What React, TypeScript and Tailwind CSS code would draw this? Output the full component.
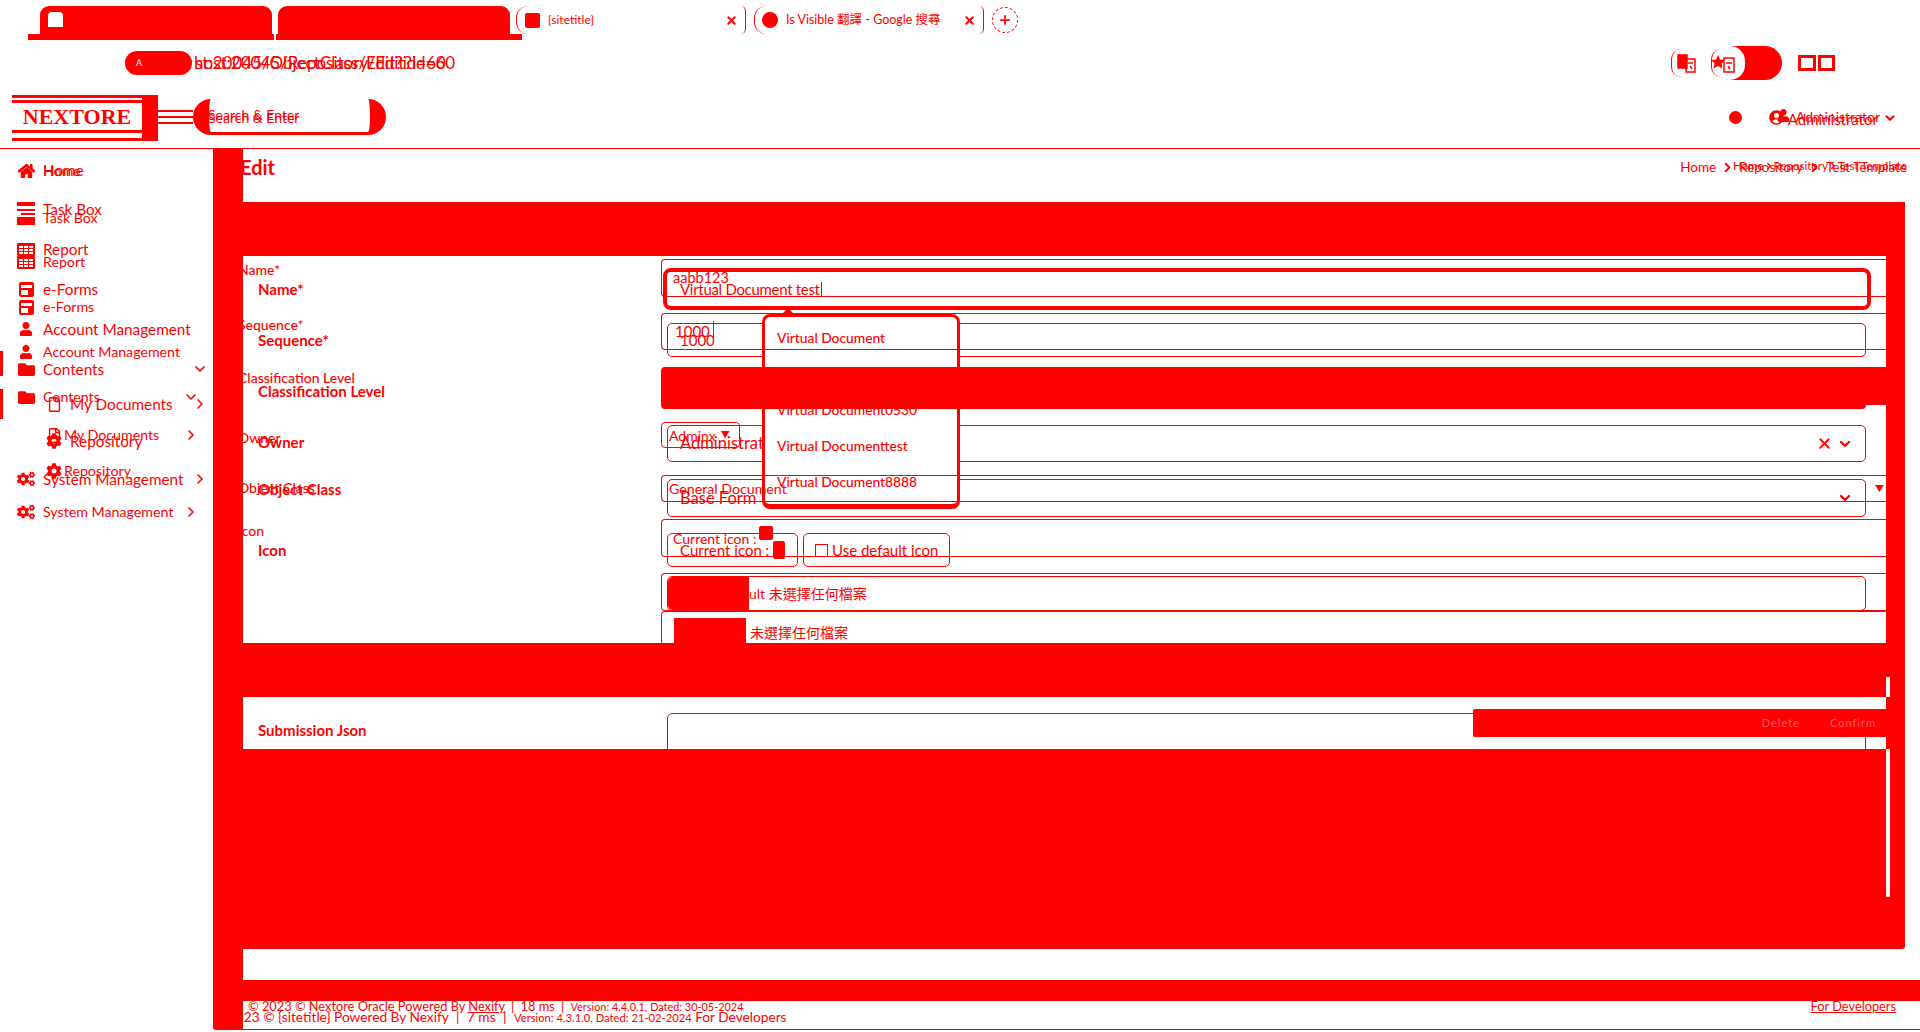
import React from "react";
import { ChevronDown, ChevronRight, Plus, X } from "lucide-react";
import { FaCog, FaCogs, FaFolder, FaHome, FaRegFile, FaRegFileAlt, FaUser, FaUserCircle } from "react-icons/fa";

const font = "font-['Lato','Noto_Sans_CJK_TC',sans-serif]";

const TaskIcon = () => (
  <svg width="18" height="23" viewBox="0 0 18 23" fill="#ff0000" className="translate-y-[4px]">
    <rect width="18" height="4" />
    <rect y="7" width="18" height="2" />
    <rect x="4" y="11" width="14" height="2" />
    <rect y="15" width="18" height="8" />
  </svg>
);

const TableIcon = () => (
  <svg width="18" height="13" viewBox="0 0 18 13" fill="#ff0000">
    <path fillRule="evenodd" d="M1 0h16a1 1 0 0 1 1 1v11a1 1 0 0 1-1 1H1a1 1 0 0 1-1-1V1a1 1 0 0 1 1-1zM2 3v2h4V3zm5 0v2h4V3zm5 0v2h4V3zM2 6v2h4V6zm5 0v2h4V6zm5 0v2h4V6zM2 9v2h4V9zm5 0v2h4V9zm5 0v2h4V9z" />
  </svg>
);

const FormIcon = () => (
  <svg width="15" height="15" viewBox="0 0 15 15" fill="#ff0000">
    <path fillRule="evenodd" d="M2 0h11a2 2 0 0 1 2 2v11a2 2 0 0 1-2 2H2a2 2 0 0 1-2-2V2a2 2 0 0 1 2-2zM2 3v3h11V3zm0 5v5h7V8z" />
  </svg>
);

type Item = { label: string; icon: React.ReactNode; sub?: boolean; chev?: "down" | "right"; mt: string; bar?: boolean };

const sideA: Item[] = [
  { label: "Home", icon: <FaHome size={17} />, mt: "mt-[11px]" },
  { label: "Task Box", icon: <TaskIcon />, mt: "mt-[19px]" },
  { label: "Report", icon: <TableIcon />, mt: "mt-[20px]" },
  { label: "e-Forms", icon: <FormIcon />, mt: "mt-[20px]" },
  { label: "Account Management", icon: <FaUser size={14} />, mt: "mt-[20px]" },
  { label: "Contents", icon: <FaFolder size={17} />, chev: "down", mt: "mt-[20px]", bar: true },
  { label: "My Documents", icon: <FaRegFile size={15} />, sub: true, chev: "right", mt: "mt-[15px]" },
  { label: "Repository", icon: <FaCog size={16} />, sub: true, mt: "mt-[17px]" },
  { label: "System Management", icon: <FaCogs size={18} />, chev: "right", mt: "mt-[18px]" },
];

const sideB: Item[] = [
  { label: "Home", icon: <FaHome size={17} />, mt: "mt-[12px]" },
  { label: "Task Box", icon: null, mt: "mt-[27px]" },
  { label: "Report", icon: <TableIcon />, mt: "mt-[24px]" },
  { label: "e-Forms", icon: <FormIcon />, mt: "mt-[25px]" },
  { label: "Account Management", icon: <FaUser size={14} />, mt: "mt-[25px]" },
  { label: "Contents", icon: <FaFolder size={17} />, chev: "down", mt: "mt-[25px]", bar: true },
  { label: "My Documents", icon: <FaRegFileAlt size={15} />, sub: true, chev: "right", mt: "mt-[18px]" },
  { label: "Repository", icon: <FaCog size={16} />, sub: true, mt: "mt-[16px]" },
  { label: "System Management", icon: <FaCogs size={18} />, chev: "right", mt: "mt-[21px]" },
];

const Sidebar = ({ items, big }: { items: Item[]; big: boolean }) => (
  <div className="flex w-[213px] shrink-0 flex-col">
    {items.map((it) => (
      <div
        key={it.label}
        className={`relative flex h-[20px] items-center ${it.mt} ${big ? "pr-[5px] text-[15.3px]" : "pr-[14px] text-[14.2px]"}`}
      >
        {it.bar && <span className={`absolute left-0 w-[3px] bg-[#ff0000] ${big ? "top-[-8px] h-[25px]" : "top-[2px] h-[30px]"}`} />}
        <span className={`flex items-center justify-center ${it.sub ? "ml-[44px] w-[20px]" : "ml-[17px] w-[18px]"}`}>{it.icon}</span>
        <span className={it.sub ? (big ? "ml-[6px]" : "ml-0") : "ml-[8px]"}>{it.label}</span>
        {it.chev === "down" && <ChevronDown size={16} strokeWidth={2.5} className="ml-auto" />}
        {it.chev === "right" && <ChevronRight size={16} strokeWidth={2.5} className="ml-auto" />}
      </div>
    ))}
  </div>
);

const Tabs = () => (
  <div className="relative flex h-[40px] items-end pl-[40px]">
    <div className="absolute bottom-0 left-[28px] h-[6px] w-[246px] bg-[#ff0000]" />
    <div className="absolute bottom-0 left-[276px] h-[6px] w-[246px] bg-[#ff0000]" />
    <div className="relative flex h-[34px] w-[232px] items-start rounded-t-[9px] bg-[#ff0000] pl-[8px] pt-[6px]">
      <div className="h-[15px] w-[15px] rounded-t-[4px] bg-white" />
    </div>
    <div className="relative ml-[6px] h-[34px] w-[232px] rounded-t-[9px] bg-[#ff0000]" />
    <div className="relative ml-[6px] flex h-[28px] w-[230px] items-center self-start mt-[6px] rounded-l-[12px] border-l border-[#ff0000] pl-[8px]">
      <div className="h-[15px] w-[15px] rounded-[2px] bg-[#ff0000]" />
      <span className="ml-[8px] text-[12px]">{"{sitetitle}"}</span>
      <X size={13} strokeWidth={3.5} className="ml-auto mr-[3px]" />
      <div className="h-full w-[5px] rounded-r-[12px] border-r border-[#ff0000]" />
    </div>
    <div className="ml-[8px] flex h-[28px] w-[230px] items-center self-start mt-[6px] rounded-l-[12px] border-l border-[#ff0000] pl-[7px]">
      <div className="h-[16px] w-[16px] rounded-full bg-[#ff0000]" />
      <span className="ml-[8px] whitespace-nowrap text-[12.5px]">Is Visible 翻譯 - Google 搜尋</span>
      <X size={13} strokeWidth={3.5} className="ml-auto mr-[3px]" />
      <div className="h-full w-[5px] rounded-r-[12px] border-r border-[#ff0000]" />
    </div>
    <div className="ml-[8px] flex h-[26px] w-[26px] items-center justify-center self-start mt-[7px] rounded-full border border-dashed border-[#ff0000]">
      <Plus size={14} strokeWidth={3} />
    </div>
  </div>
);

const Toolbar = () => (
  <div className="flex h-[55px] items-start pt-[11px]">
    <div className="ml-[125px] flex h-[24px] w-[67px] items-center rounded-full bg-[#ff0000] pl-[11px]">
      <span className="text-[9px] text-white">A</span>
    </div>
    <span className="ml-[3px] mt-[1px] text-[17px] leading-[22px]">st:20045/ObjectClass/Edit?id=60</span>
    <div className="ml-auto mr-[85px] -mt-[5px] flex items-center">
      <div className="relative z-10 mr-[15px] flex h-[28px] w-[25px] items-center justify-end rounded-l-[10px] border-l border-[#ff0000]">
        <svg width="19" height="19" viewBox="0 0 19 19" fill="none" stroke="#ff0000" strokeWidth="1.5">
          <rect x="1" y="1" width="9" height="13" fill="#ff0000" />
          <rect x="9" y="5" width="9" height="13" />
          <path d="M11 9h5M13 12l2 3" />
        </svg>
      </div>
      <div className="relative z-10 -mr-[5px] flex h-[28px] w-[24px] items-center justify-end rounded-l-[10px] border-l border-[#ff0000]">
        <svg width="23" height="19" viewBox="0 0 23 19" fill="none" stroke="#ff0000" strokeWidth="1.5">
          <path d="M6 1l2 4.500 5 .5-3.500 3.500 1 5L6 12l-4.500 2.500 1-5L-1 6l5-.5z" fill="#ff0000" stroke="none" />
          <rect x="12" y="4" width="10" height="14" />
          <path d="M14 9h6M16 12l2 3" />
        </svg>
      </div>
      <div className="h-[34px] w-[52px] rounded-r-full bg-[#ff0000]">
        <div className="h-[34px] w-[15px] rounded-r-full bg-white" />
      </div>
      <div className="ml-[16px] flex gap-[2px]">
        <div className="h-[16px] w-[18px] border-[3px] border-[#ff0000]" />
        <div className="h-[16px] w-[17px] border-[3px] border-[#ff0000]" />
      </div>
    </div>
  </div>
);

const Logo = () => (
  <div className="ml-[12px] flex h-[46px] w-[146px] bg-[#ff0000]">
    <div className="flex w-[130px] flex-col">
      <div className="mt-[3px] h-[2px] bg-white" />
      <div className="mt-[3px] flex h-[27px] items-center justify-center bg-white font-['Liberation_Serif',serif] text-[22px] font-bold leading-none">
        NEXTORE
      </div>
      <div className="mt-[3px] h-[5px] bg-white" />
    </div>
  </div>
);

const Breadcrumb = ({ size, gap, chev }: { size: string; gap: string; chev: number }) => (
  <div className={`flex items-center whitespace-nowrap ${gap} ${size}`}>
    <span>Home</span>
    <ChevronRight size={chev} strokeWidth={3} />
    <span>Repository</span>
    <ChevronRight size={chev} strokeWidth={3} />
    <span>Test Template</span>
  </div>
);

const FieldA = ({ label, labelMt, mt, h, children }: { label: string; labelMt: string; mt: string; h: string; children: React.ReactNode }) => (
  <div className={`flex shrink-0 ${mt}`}>
    <div className={`-ml-[5px] h-[20px] w-[423px] shrink-0 whitespace-nowrap text-[14px] font-medium leading-[20px] ${labelMt}`}>{label}</div>
    <div className={`flex w-[1225px] items-center rounded-l-[4px] border-y border-l border-[#ff0000] ${h}`}>{children}</div>
  </div>
);

const FieldB = ({ label, labelCls, mt, h, children }: { label: string; labelCls?: string; mt: string; h: string; children: React.ReactNode }) => (
  <div className={`flex items-center ${mt}`}>
    <div className={`w-[409px] shrink-0 whitespace-nowrap text-[15px] font-bold ${labelCls ?? ""}`}>{label}</div>
    <div className={`flex w-[1199px] items-center rounded-[5px] border border-[#ff0000] pl-[12px] pr-[12px] text-[16.5px] ${h}`}>{children}</div>
  </div>
);

const options = ["Virtual Document", "Virtual Document1", "Virtual Document0530", "Virtual Documenttest", "Virtual Document8888"];

const FieldBName = () => (
  <div className="mt-[119px] flex items-center">
    <div className="w-[405px] shrink-0 text-[15px] font-bold">Name*</div>
    <div className="relative flex h-[42px] w-[1208px] items-center rounded-[8px] border-4 border-[#ff0000] pl-[13px] text-[15px] tracking-[-0.3px]">
      <span>Virtual Document test</span>
      <span className="ml-px h-[15px] w-px bg-[#ff0000]" />
      <div className="absolute left-[115px] top-[36px] z-10 h-0 w-0 border-x-[6px] border-b-[6px] border-x-transparent border-b-[#ff0000]" />
      <div className="absolute left-[95px] top-[42px] z-10 flex h-[195px] w-[198px] flex-col rounded-[8px] border-[3px] border-b-[5px] border-[#ff0000] bg-white pt-[3px] text-[13.8px] font-medium tracking-normal">
        {options.map((o) => (
          <div key={o} className="flex h-[36px] shrink-0 items-center pl-[12px]">
            {o}
          </div>
        ))}
      </div>
    </div>
  </div>
);

// what sits underneath: the page with the wider fields
const PageB = () => (
  <div className="flex h-[1032px] flex-col">
    <div className="h-[149px] shrink-0 border-b border-[#ff0000]">
      <Tabs />
      <Toolbar />
      <div className="flex h-[53px]">
        <Logo />
        <div className="mt-[15px] flex h-[2px] w-[35px] flex-col gap-[4px]">
          <div className="h-[2px] shrink-0 bg-[#ff0000]" />
          <div className="h-[2px] shrink-0 bg-[#ff0000]" />
          <div className="h-[2px] shrink-0 bg-[#ff0000]" />
        </div>
        <div className="mt-[4px] flex h-[36px] w-[193px] items-center rounded-full border-x-[16px] border-b-[3px] border-[#ff0000] text-[14px]">
          <span className="-ml-[1px] mt-[3px]">Search &amp; Enter</span>
        </div>
        <div className="ml-auto mr-[23px] flex items-start pt-[13px] text-[15px]">
          <div className="mr-[27px] mt-[3px] h-[13px] w-[13px] rounded-full bg-[#ff0000]" />
          <FaUserCircle size={15} className="mt-[2px] mr-[4px]" />
          <span>Administrator</span>
          <ChevronDown size={14} strokeWidth={3.5} className="ml-[5px] mt-[3px]" />
        </div>
      </div>
    </div>
    <div className="flex flex-1">
      <Sidebar items={sideB} big={false} />
      <div className="ml-[30px] flex flex-1 flex-col pl-[15px]">
        <FieldBName />
        <FieldB label="Sequence*" mt="mt-[13px]" h="h-[34px]">
          <span className="text-[15px]">1000</span>
        </FieldB>
        <FieldB label="Classification Level" mt="mt-[17px]" h="h-[34px]">
          &nbsp;
        </FieldB>
        <FieldB label="Owner" labelCls="-mt-[2px]" mt="mt-[17px]" h="h-[37px]">
          <span>Administrator</span>
          <X size={17} strokeWidth={2.5} className="ml-auto mr-[1px]" />
          <ChevronDown size={16} strokeWidth={3.5} className="ml-[3px]" />
        </FieldB>
        <FieldB label="Object Class" labelCls="-mt-[18px]" mt="mt-[17px]" h="h-[38px]">
          <span>Base Form</span>
          <ChevronDown size={16} strokeWidth={3.5} className="ml-auto" />
        </FieldB>
        <div className="mt-[16px] flex items-center">
          <div className="w-[409px] shrink-0 text-[15px] font-bold">Icon</div>
          <div className="flex h-[34px] w-[131px] items-center rounded-[5px] border border-[#ff0000] pl-[12px] text-[15px]">
            Current icon :<span className="ml-[4px] h-[18px] w-[12px] rounded-[2px] bg-[#ff0000]" />
          </div>
          <div className="ml-[5px] flex h-[34px] w-[147px] items-center rounded-[5px] border border-[#ff0000] pl-[11px] text-[15px]">
            <span className="mr-[4px] h-[13px] w-[13px] border border-[#ff0000]" />
            Use default icon
          </div>
        </div>
        <div className="ml-[409px] mt-[9px] flex h-[35px] w-[1199px] items-center rounded-[5px] border border-[#ff0000]">
          <div className="-my-[1px] h-[33px] w-[81px] rounded-l-[5px] bg-[#ff0000]" />
          <span className="text-[14px]">ult 未選擇任何檔案</span>
        </div>
        <FieldB label="Submission Json" labelCls="-mt-[26px]" mt="mt-[102px]" h="h-[60px]">
          &nbsp;
        </FieldB>
        <div className="-ml-[45px] mt-[234px] whitespace-nowrap text-[13.7px] leading-[20px]">
          © 2023 © {"{sitetitle}"} Powered By Nexify <span className="mx-[4px]">|</span> 7 ms <span className="mx-[4px]">|</span>{" "}
          <span className="text-[11.2px]">Version: 4.3.1.0, Dated: 21-02-2024</span> For Developers
        </div>
      </div>
    </div>
  </div>
);

// what sits on top: the page with the narrower fields and the solid panels
const PageA = () => (
  <div className="pointer-events-none absolute inset-0 z-20 flex flex-col">
    <div className="h-[149px] shrink-0">
      <div className="h-[40px]" />
      <div className="h-[55px] pl-[194px] pt-[12px] text-[17px] leading-[22px]">host:20045/Repository/Edit?id=60</div>
      <div className="flex h-[53px]">
        <span className="ml-[208px] mt-[9px] text-[14px]">Search &amp; Enter</span>
        <div className="ml-auto mr-[40px] flex pt-[11px] text-[14px]">
          <FaUser size={13} className="mt-[3px] mr-[6px]" />
          <span>Administrator</span>
        </div>
      </div>
    </div>
    <div className="flex flex-1">
      <Sidebar items={sideA} big={true} />
      <div className="mb-[2px] w-[30px] shrink-0 rounded-bl-[3px] bg-[#ff0000]" />
      <div className="flex w-[1643px] shrink-0 flex-col">
        <div className="flex h-[53px] items-start justify-between">
          <span className="-ml-[3px] mt-[3px] text-[20px] font-bold">Edit</span>
          <div className="-mr-[21px] mt-[8px] flex flex-col items-end">
            <Breadcrumb size="text-[13.5px]" gap="gap-[4px]" chev={15} />
            <div className="-mt-[20px]">
              <Breadcrumb size="text-[11.5px]" gap="gap-0" chev={10} />
            </div>
          </div>
        </div>
        <div className="h-[54px] shrink-0 bg-[#ff0000]" />
        <div className="flex h-[387px] flex-col overflow-hidden">
          <FieldA label="Name*" labelMt="mt-[1px]" mt="mt-[3px]" h="h-[38px]">
            <span className="pl-[11px] text-[14.5px]">aabb123</span>
          </FieldA>
          <FieldA label="Sequence*" labelMt="mt-[2px]" mt="mt-[16px]" h="h-[37px]">
            <span className="pl-[13px] text-[15px]">1000</span>
            <span className="ml-[3px] h-[17px] w-px -translate-y-[2px] bg-[#ff0000]" />
          </FieldA>
          <div className="mt-[17px] flex shrink-0">
            <div className="-ml-[5px] mt-[1px] h-[20px] w-[423px] shrink-0 whitespace-nowrap text-[14px] font-medium leading-[20px]">Classification Level</div>
            <div className="w-[1225px]">
              <div className="h-[38px] rounded-tl-[4px] bg-[#ff0000]" />
              <div className="h-[4px] w-[1205px] rounded-b-[4px] bg-[#ff0000]" />
            </div>
          </div>
          <div className="mt-[13px] flex shrink-0">
            <div className="-ml-[5px] mt-[6px] h-[20px] w-[423px] shrink-0 text-[14px] font-medium leading-[20px]">Owner</div>
            <div className="flex h-[26px] w-[79px] items-center rounded-[4px] border border-[#ff0000] pl-[7px] text-[14px]">
              Adminx <span className="ml-[5px] text-[9px]">▼</span>
            </div>
          </div>
          <FieldA label="Object Class" labelMt="mt-[3px]" mt="mt-[27px]" h="h-[27px]">
            <span className="pl-[7px] text-[14.2px]">General Document</span>
            <span className="ml-auto mr-[2px] text-[9px]">▼</span>
          </FieldA>
          <FieldA label="Icon" labelMt="mt-[2px]" mt="mt-[17px]" h="h-[38px]">
            <span className="pl-[11px] text-[14px]">Current icon :</span>
            <span className="ml-[3px] -mt-[10px] h-[14px] w-[14px] rounded-[2px] bg-[#ff0000]" />
          </FieldA>
          <div className="ml-[418px] mt-[16px] h-[38px] w-[1225px] shrink-0 rounded-l-[4px] border-y border-l border-[#ff0000]" />
          <div className="ml-[418px] flex h-[40px] w-[1225px] shrink-0 items-start rounded-l-[4px] border-l border-t border-[#ff0000] pl-[12px]">
            <div className="mt-[6px] h-[40px] w-[72px] bg-[#ff0000]" />
            <span className="ml-[4px] mt-[10px] text-[14px] leading-[22px]">未選擇任何檔案</span>
          </div>
        </div>
        <div className="h-[54px] shrink-0 bg-[#ff0000]" />
        <div className="flex h-[52px] shrink-0 flex-col items-end pt-[12px]">
          <div className="flex h-[28px] w-[413px] items-center justify-end rounded-l-[2px] bg-[#ff0000] pr-[10px] text-[11px] tracking-[1px] text-[#ff6060]">
            <span>Delete</span>
            <span className="ml-[30px]">Confirm</span>
          </div>
        </div>
        <div className="h-[200px] shrink-0 bg-[#ff0000]" />
        <div className="h-[31px] shrink-0" />
        <div className="-mr-[34px] h-[21px] shrink-0 bg-[#ff0000]" />
        <div className="-mr-[34px] flex h-[29px] shrink-0 items-start justify-between border-b border-[#ff0000] pl-[5px] pr-[24px] text-[12.8px] leading-[11px]">
          <span className="whitespace-nowrap">
            © 2023 © Nextore Oracle Powered By <span className="underline">Nexify</span> <span className="mx-[3px]">|</span> 18 ms <span className="mx-[3px]">|</span>{" "}
            <span className="text-[10.9px]">Version: 4.4.0.1, Dated: 30-05-2024</span>
          </span>
          <span className="underline">For Developers</span>
        </div>
      </div>
      <div className="mt-[53px] flex h-[747px] w-[19px] shrink-0 flex-col rounded-br-[3px] bg-[#ff0000]">
        <div className="mt-[475px] h-[20px] w-[4px] bg-white" />
        <div className="mt-[52px] h-[148px] w-[4px] bg-white" />
      </div>
    </div>
  </div>
);

const App = () => {
  return (
    <div className={`relative h-[1032px] w-[1920px] overflow-hidden bg-white text-[#ff0000] ${font}`}>
      <PageB />
      <PageA />
    </div>
  );
};

export default App;
